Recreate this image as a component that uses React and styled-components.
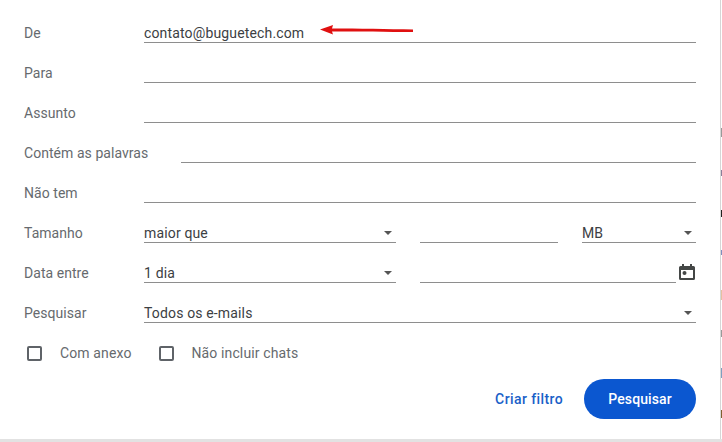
import React from 'react'
import styled, { createGlobalStyle } from 'styled-components'

const GlobalStyle = createGlobalStyle`
  html, body {
    margin: 0;
    padding: 0;
    background: #fff;
    overflow: hidden;
  }
  * {
    box-sizing: border-box;
  }
`

const Page = styled.div`
  width: 722px;
  height: 442px;
  display: flex;
  flex-direction: column;
  background: #fff;
  font-family: Roboto, 'Liberation Sans', sans-serif;
  font-size: 14px;
  color: #444746;
`

const Main = styled.div`
  display: flex;
  height: 439px;
`

const Panel = styled.form`
  position: relative;
  width: 720px;
  padding: 3px 24px 0 24px;
  background: #fff;
`

// sliver of the mail list showing behind the dialog
const Edge = styled.div`
  width: 2px;
  border-left: 1px solid #d6d6d6;
  background: linear-gradient(
    to bottom,
    #fff 128px,
    #999 128px 137px,
    #fff 137px 170px,
    #8a7f9a 170px 176px,
    #fff 176px 210px,
    #222 210px 217px,
    #fff 217px 250px,
    #7f8fc0 250px 255px,
    #fff 255px 290px,
    #e5c0a0 290px 300px,
    #fff 300px 330px,
    #999 330px 337px,
    #fff 337px 368px,
    #7f9fc0 368px 378px,
    #fff 378px 410px,
    #805f30 410px 418px,
    #fff 418px
  );
`

const BottomShade = styled.div`
  height: 3px;
  background: #e2e2e2;
`

const Row = styled.div`
  height: 40px;
  display: flex;
  align-items: stretch;
`

const Label = styled.label`
  flex: ${props => (props.$auto ? '0 0 auto' : '0 0 120px')};
  margin-right: ${props => (props.$auto ? '33px' : '0')};
  padding-top: 20px;
  line-height: 20px;
  letter-spacing: 0.05px;
  color: #666a6e;
`

const Fields = styled.div`
  flex: 1 1 0;
  display: flex;
  gap: 24px;
`

const Field = styled.div`
  flex: ${props => (props.$width ? `0 0 ${props.$width}px` : '1 1 0')};
  height: 40px;
  display: flex;
  align-items: flex-start;
  justify-content: space-between;
  padding-top: 20px;
  line-height: 20px;
  color: #3c4043;
  border-bottom: 1px solid #8e8e8e;
`

const Value = styled.span`
  font-size: 14px;
  letter-spacing: 0.15px;
`

const Caret = styled.span`
  width: 0;
  height: 0;
  margin: 8px 4px 0 0;
  border-left: 4.5px solid transparent;
  border-right: 4.5px solid transparent;
  border-top: 4px solid #555;
`

const DateCell = styled.div`
  flex: 1 1 0;
  display: flex;
  gap: 2px;
`

const CalendarButton = styled.span`
  flex: 0 0 18px;
  padding-top: 20px;
  color: #444746;
  svg {
    display: block;
  }
`

const Options = styled.div`
  height: 40px;
  display: flex;
  align-items: center;
  padding: 20px 0 0 3px;
`

const CheckOption = styled.label`
  display: flex;
  align-items: center;
  gap: 18px;
  margin-right: 27px;
  line-height: 20px;
  letter-spacing: 0.12px;
  color: #666a6e;
`

const Box = styled.span`
  width: 15px;
  height: 15px;
  border: 2px solid #5f6368;
  border-radius: 2px;
`

const Actions = styled.div`
  display: flex;
  justify-content: flex-end;
  align-items: center;
  gap: 21px;
  margin-top: 16px;
`

const FilterLink = styled.a`
  font-size: 14px;
  font-weight: 500;
  color: #1a5fc8;
  letter-spacing: 0.4px;
`

const SearchButton = styled.button`
  width: 112px;
  height: 40px;
  border: 0;
  border-radius: 20px;
  background: #0b57d0;
  color: #fff;
  font-family: inherit;
  font-size: 14px;
  font-weight: 500;
  letter-spacing: 0.1px;
`

const Arrow = styled.svg`
  position: absolute;
  left: 318px;
  top: 23px;
`

const CalendarIcon = () => (
  <svg width="18" height="18" viewBox="0 0 18 18" fill="currentColor">
    <path d="M4 1h2v2h6V1h2v2h1.500A1.500 1.500 0 0 1 17 4.500v11a1.500 1.500 0 0 1-1.500 1.500h-13A1.500 1.500 0 0 1 1 15.500v-11A1.500 1.500 0 0 1 2.500 3H4V1Zm-1 6v8h12V7H3Z" />
    <circle cx="6.500" cy="10" r="2" />
  </svg>
)

const SelectField = ({ value, width }) => (
  <Field $width={width}>
    <Value>{value}</Value>
    <Caret />
  </Field>
)

const App = () => (
  <Page>
    <GlobalStyle />
    <Main>
      <Panel>
        <Row>
          <Label>De</Label>
          <Field>
            <Value>contato@buguetech.com</Value>
          </Field>
        </Row>
        <Row>
          <Label>Para</Label>
          <Field />
        </Row>
        <Row>
          <Label>Assunto</Label>
          <Field />
        </Row>
        <Row>
          <Label $auto>Contém as palavras</Label>
          <Field />
        </Row>
        <Row>
          <Label>Não tem</Label>
          <Field />
        </Row>
        <Row>
          <Label>Tamanho</Label>
          <Fields>
            <SelectField value="maior que" width={252} />
            <Field $width={138} />
            <SelectField value="MB" width={114} />
          </Fields>
        </Row>
        <Row>
          <Label>Data entre</Label>
          <Fields>
            <SelectField value="1 dia" width={252} />
            <DateCell>
              <Field />
              <CalendarButton>
                <CalendarIcon />
              </CalendarButton>
            </DateCell>
          </Fields>
        </Row>
        <Row>
          <Label>Pesquisar</Label>
          <SelectField value="Todos os e-mails" />
        </Row>
        <Options>
          <CheckOption>
            <Box />
            Com anexo
          </CheckOption>
          <CheckOption>
            <Box />
            Não incluir chats
          </CheckOption>
        </Options>
        <Actions>
          <FilterLink>Criar filtro</FilterLink>
          <SearchButton type="button">Pesquisar</SearchButton>
        </Actions>
        <Arrow width="98" height="14" viewBox="0 0 98 14">
          <path d="M2 6.500 15 2 14 5.500C40 5.500 70 6 95 6.500L95 9C70 9 40 8.500 14 8.500L15 11.500Z" fill="#e01010" />
        </Arrow>
      </Panel>
      <Edge />
    </Main>
    <BottomShade />
  </Page>
)

export default App
